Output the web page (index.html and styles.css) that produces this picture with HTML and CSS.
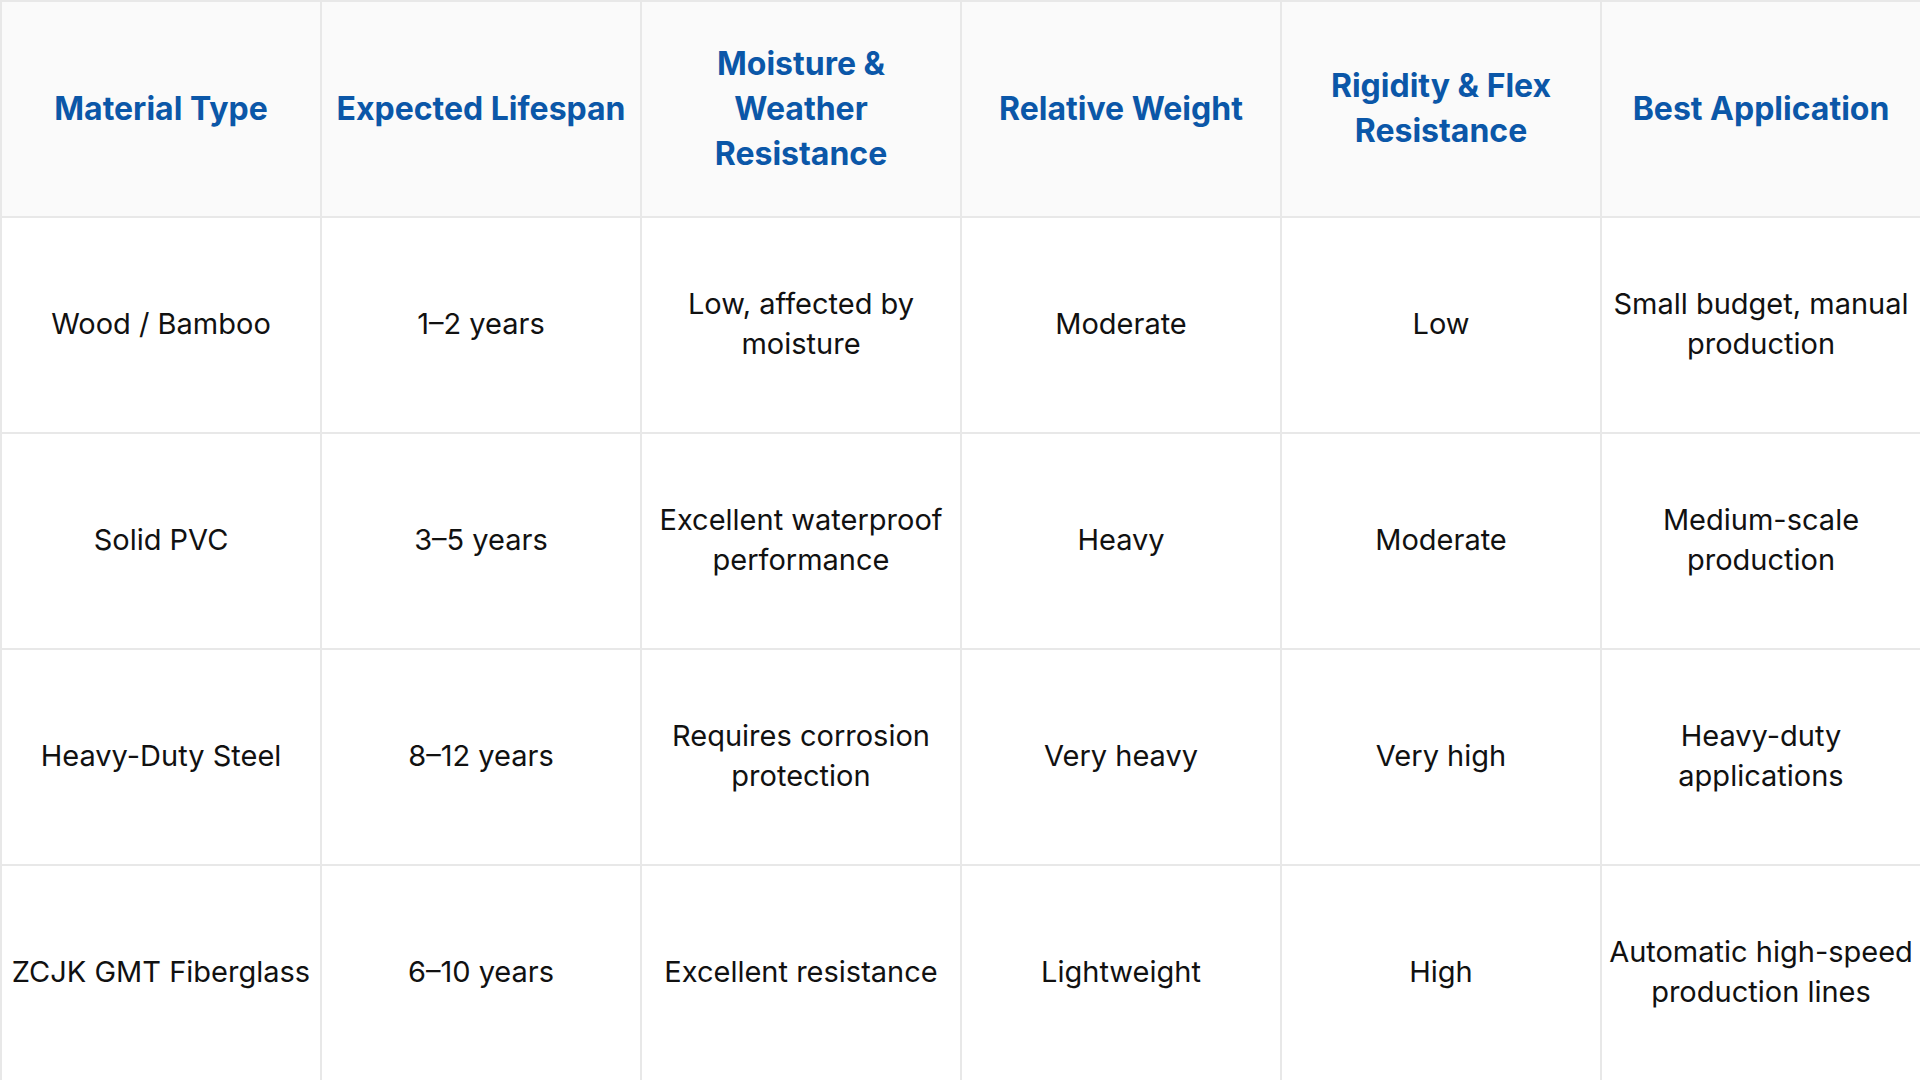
FILE: index.html
```html
<!DOCTYPE html>
<html lang="en">
<head>
<meta charset="utf-8">
<title>Material Comparison</title>
<link rel="stylesheet" href="styles.css">
</head>
<body>
<table class="compare">
  <thead>
    <tr>
      <th>Material Type</th>
      <th>Expected Lifespan</th>
      <th>Moisture &amp; Weather Resistance</th>
      <th>Relative Weight</th>
      <th>Rigidity &amp; Flex Resistance</th>
      <th>Best Application</th>
    </tr>
  </thead>
  <tbody>
    <tr>
      <td>Wood / Bamboo</td>
      <td>1–2 years</td>
      <td>Low, affected by moisture</td>
      <td>Moderate</td>
      <td>Low</td>
      <td>Small budget, manual production</td>
    </tr>
    <tr>
      <td>Solid PVC</td>
      <td>3–5 years</td>
      <td>Excellent waterproof performance</td>
      <td>Heavy</td>
      <td>Moderate</td>
      <td>Medium-scale production</td>
    </tr>
    <tr>
      <td>Heavy-Duty Steel</td>
      <td>8–12 years</td>
      <td>Requires corrosion protection</td>
      <td>Very heavy</td>
      <td>Very high</td>
      <td>Heavy-duty applications</td>
    </tr>
    <tr>
      <td>ZCJK GMT Fiberglass</td>
      <td>6–10 years</td>
      <td>Excellent resistance</td>
      <td>Lightweight</td>
      <td>High</td>
      <td>Automatic high-speed production lines</td>
    </tr>
  </tbody>
</table>
</body>
</html>
```

FILE: styles.css
```css
html, body {
  margin: 0;
  padding: 0;
  background: #ffffff;
}

body {
  font-family: Inter, "Noto Sans", "Liberation Sans", sans-serif;
  color: #111111;
}

.compare {
  width: 1920px;
  height: 1080px;
  border-collapse: collapse;
  table-layout: fixed;
}

.compare th,
.compare td {
  width: 320px;
  height: 216px;
  border: 2px solid #e8e8e8;
  text-align: center;
  vertical-align: middle;
  box-sizing: border-box;
}

.compare th {
  background: #fafafa;
  color: #0b57a8;
  font-size: 32px;
  font-weight: 700;
  line-height: 45px;
  padding: 0 10px 2px;
}

.compare td {
  font-size: 29px;
  font-weight: 400;
  line-height: 40px;
  padding: 0 3px 2px;
}
```
